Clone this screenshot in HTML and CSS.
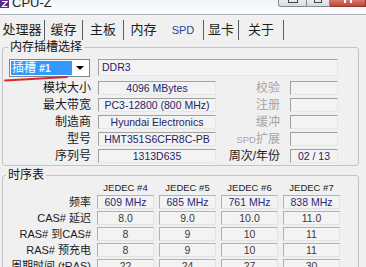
FILE: index.html
```html
<!DOCTYPE html>
<html lang="zh-CN">
<head>
    <meta charset="UTF-8">
    <title>CPU-Z</title>
    <link rel="stylesheet" href="styles.css">
</head>
<body>
    <div class="titlebar">
        <span class="app-icon">
            <svg width="9" height="8" viewBox="0 0 9 8"><rect width="9" height="8" fill="#5d2b8c"/><path d="M2 1.5h5L2.5 6.5h5" stroke="#fff" stroke-width="1.2" fill="none"/></svg>
        </span>
        <span class="title">CPU-Z</span>
        <div class="winbtns">
            <span class="wb min"><i></i></span>
            <span class="wb max"><i></i></span>
            <span class="wb close"><i></i></span>
        </div>
    </div>

    <div class="tabs">
        <div class="tab t1">处理器</div>
        <div class="tab t2">缓存</div>
        <div class="tab t3">主板</div>
        <div class="tab t4 noline">内存</div>
        <div class="tab t5 active">SPD</div>
        <div class="tab t6">显卡</div>
        <div class="tab t7">关于</div>
    </div>

    <fieldset class="group slots">
        <legend>内存插槽选择</legend>
        <div class="slot-grid">
            <div class="slot-cell">
                <div class="slot-select">
                    <span class="slot-value">插槽 <b>#1</b></span>
                    <span class="drop"><i></i></span>
                </div>
                <svg class="mark" width="70" height="7" viewBox="0 0 70 7"><path d="M2 4.5 Q28 3 64 1" stroke="#d8262a" stroke-width="1.8" fill="none" stroke-linecap="round"/></svg>
            </div>
            <div class="box wide">DDR3</div>

            <div class="lbl">模块大小</div>
            <div class="box">4096 MBytes</div>
            <div class="lbl lbl2 dim">校验</div>
            <div class="box"></div>

            <div class="lbl">最大带宽</div>
            <div class="box">PC3-12800 (800 MHz)</div>
            <div class="lbl lbl2 dim">注册</div>
            <div class="box"></div>

            <div class="lbl">制造商</div>
            <div class="box">Hyundai Electronics</div>
            <div class="lbl lbl2 dim">缓冲</div>
            <div class="box"></div>

            <div class="lbl">型号</div>
            <div class="box">HMT351S6CFR8C-PB</div>
            <div class="lbl lbl2 dim"><span class="lat">SPD</span>扩展</div>
            <div class="box"></div>

            <div class="lbl">序列号</div>
            <div class="box">1313D635</div>
            <div class="lbl lbl2">周次/年份</div>
            <div class="box">02 / 13</div>
        </div>
    </fieldset>

    <fieldset class="group timings">
        <legend>时序表</legend>
        <div class="timing-grid">
            <div></div>
            <div class="th">JEDEC #4</div>
            <div class="th">JEDEC #5</div>
            <div class="th">JEDEC #6</div>
            <div class="th">JEDEC #7</div>

            <div class="tl">频率</div>
            <div class="tbox freq">609 MHz</div>
            <div class="tbox freq">685 MHz</div>
            <div class="tbox freq">761 MHz</div>
            <div class="tbox freq">838 MHz</div>

            <div class="tl">CAS# 延迟</div>
            <div class="tbox">8.0</div>
            <div class="tbox">9.0</div>
            <div class="tbox">10.0</div>
            <div class="tbox">11.0</div>

            <div class="tl">RAS# 到CAS#</div>
            <div class="tbox">8</div>
            <div class="tbox">9</div>
            <div class="tbox">10</div>
            <div class="tbox">11</div>

            <div class="tl">RAS# 预充电</div>
            <div class="tbox">8</div>
            <div class="tbox">9</div>
            <div class="tbox">10</div>
            <div class="tbox">11</div>

            <div class="tl">周期时间 (tRAS)</div>
            <div class="tbox">22</div>
            <div class="tbox">24</div>
            <div class="tbox">27</div>
            <div class="tbox">30</div>
        </div>
    </fieldset>
</body>
</html>
```

FILE: styles.css
```css
* {
    box-sizing: border-box;
}
body {
    margin: 0;
    width: 366px;
    height: 267px;
    overflow: hidden;
    background-color: #f0f0f0;
    font-family: "Liberation Sans", "Noto Sans CJK SC", sans-serif;
    color: #1a1a1a;
}

/* title bar */
.titlebar {
    height: 15px;
    display: flex;
    align-items: flex-start;
    background: linear-gradient(#f3f5f8, #fbfbfc);
    border-bottom: 1px solid #a9b0b9;
    overflow: hidden;
}
.app-icon {
    display: flex;
    width: 9px;
}
.title {
    margin-left: 3px;
    margin-top: -5px;
    font-size: 13px;
    line-height: 16px;
    color: #222;
}
.winbtns {
    margin-left: auto;
    display: flex;
}
.wb {
    height: 7px;
    border: 1px solid #858a92;
    border-top: none;
    background: linear-gradient(#e9ebee, #d6d9de);
    display: flex;
    justify-content: center;
}
.wb i {
    display: block;
    height: 3px;
    border: 1px solid #444;
    border-top: none;
}
.min {
    width: 29px;
    border-bottom-left-radius: 3px;
}
.min i {
    width: 10px;
}
.max {
    width: 23px;
    border-left: none;
}
.max i {
    width: 8px;
}
.close {
    width: 36px;
    border-color: #8d3a32;
    border-left: none;
    background: linear-gradient(#d9776b, #c4442f);
}
.close i {
    width: 8px;
    border-color: #fff;
    border-width: 0 2px;
}

/* tabs */
.tabs {
    height: 25px;
    display: flex;
    align-items: flex-end;
}
.tab {
    height: 20px;
    display: flex;
    align-items: center;
    justify-content: center;
    border-right: 1px solid #5c5c5c;
    font-size: 13px;
    line-height: 16px;
    color: #1e1e1e;
}
.tab.noline {
    border-right: none;
}
.tab.active {
    font-size: 11px;
    color: #2f3ca8;
}
.t1 { width: 45px; }
.t2 { width: 38px; }
.t3 { width: 41px; }
.t4 { width: 39px; }
.t5 { width: 41px; }
.t6 { width: 35px; }
.t7 { width: 45px; }

/* group boxes */
.group {
    margin: 0 7px 0 2px;
    padding: 5px 0 2px 0;
    border: 1px solid #c4c4c4;
    border-radius: 3px;
    min-width: 0;
}
.group legend {
    margin-left: 5px;
    padding: 0 2px;
    font-size: 12px;
    line-height: 14px;
    color: #111;
}
.timings {
    margin-top: 2px;
    padding: 0;
}
.timings legend {
    margin-left: 3px;
}

/* slot selection */
.slot-grid {
    display: grid;
    grid-template-columns: 95px 118px 74px 48px;
    grid-template-rows: 19px repeat(5, 14px);
    row-gap: 3px;
}
.slot-cell {
    position: relative;
}
.slot-select {
    margin-left: 6px;
    width: 81px;
    height: 18px;
    display: flex;
    border: 1px solid #7c8591;
    background: #fff;
    padding: 1px;
}
.slot-value {
    flex: 1;
    background: #3399ff;
    color: #fff;
    font-size: 12px;
    line-height: 14px;
    padding-left: 1px;
}
.slot-value b {
    font-size: 10px;
}
.drop {
    width: 16px;
    display: flex;
    align-items: center;
    justify-content: center;
}
.drop i {
    width: 0;
    height: 0;
    border-left: 4px solid transparent;
    border-right: 4px solid transparent;
    border-top: 4px solid #000;
}
.mark {
    position: absolute;
    left: 0;
    top: 17px;
}
.lbl {
    text-align: right;
    padding-right: 7px;
    font-size: 12px;
    line-height: 14px;
    white-space: nowrap;
}
.lbl2 {
    padding-right: 10px;
}
.dim {
    color: #a6a6a6;
}
.lat {
    font-size: 9.5px;
}
.box {
    border: 1px solid;
    border-color: #a0a0a0 #e6e6e6 #e6e6e6 #a0a0a0;
    background: #f3f3f3;
    font-size: 10.5px;
    line-height: 12px;
    text-align: center;
    color: #1f2468;
    white-space: nowrap;
    overflow: hidden;
}
.box.wide {
    grid-column: 2 / 5;
    align-self: start;
    height: 17px;
    line-height: 15px;
    text-align: left;
    padding-left: 3px;
}

/* timings table */
.timing-grid {
    display: grid;
    grid-template-columns: 89px repeat(4, 57px);
    grid-template-rows: 11px repeat(5, 14px);
    column-gap: 5px;
    row-gap: 2px;
}
.th {
    text-align: center;
    font-size: 9.5px;
    line-height: 11px;
    color: #222;
}
.tl {
    text-align: right;
    padding-right: 1px;
    font-size: 11px;
    line-height: 14px;
    white-space: nowrap;
}
.tbox {
    border: 1px solid;
    border-color: #b2b2b2 #e2e2e2 #e2e2e2 #b2b2b2;
    background: #f3f3f3;
    font-size: 10.5px;
    line-height: 12px;
    text-align: center;
    color: #3a3a3a;
}
.tbox.freq {
    color: #2c2a78;
}
```
